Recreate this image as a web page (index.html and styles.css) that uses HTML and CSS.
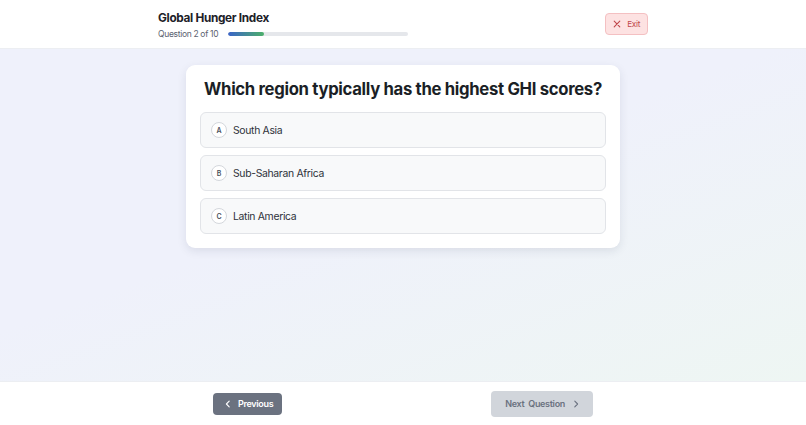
FILE: index.html
```html
<!DOCTYPE html>
<html lang="en">
<head>
    <meta charset="UTF-8">
    <meta name="viewport" content="width=device-width, initial-scale=1.0">
    <title>Global Hunger Index Quiz</title>
    <link rel="stylesheet" href="styles.css">
</head>
<body>
    <div class="page">
        <div class="header">
            <div class="header-inner">
                <div class="header-left">
                    <h1>Global Hunger Index</h1>
                    <div class="progress-row">
                        <span class="progress-label">Question 2 of 10</span>
                        <div class="progress-track">
                            <div class="progress-fill" style="width: 20%"></div>
                        </div>
                    </div>
                </div>
                <button class="exit-btn">
                    <svg width="8" height="8" viewBox="0 0 10 10"><path d="M1.5 1.5l7 7M8.5 1.5l-7 7" stroke="currentColor" stroke-width="1.4" stroke-linecap="round"/></svg>
                    Exit
                </button>
            </div>
        </div>

        <div class="main">
            <div class="card">
                <h2>Which region typically has the highest GHI scores?</h2>
                <div class="options">
                    <div class="option"><span class="letter">A</span>South Asia</div>
                    <div class="option"><span class="letter">B</span>Sub-Saharan Africa</div>
                    <div class="option"><span class="letter">C</span>Latin America</div>
                </div>
            </div>
        </div>

        <div class="footer">
            <div class="footer-inner">
                <button class="prev-btn">
                    <svg width="8" height="8" viewBox="0 0 10 10"><path d="M6.5 1.5L3 5l3.5 3.5" fill="none" stroke="currentColor" stroke-width="1.4" stroke-linecap="round" stroke-linejoin="round"/></svg>
                    Previous
                </button>
                <button class="next-btn">
                    Next Question
                    <svg width="8" height="8" viewBox="0 0 10 10"><path d="M3.5 1.5L7 5 3.5 8.5" fill="none" stroke="currentColor" stroke-width="1.4" stroke-linecap="round" stroke-linejoin="round"/></svg>
                </button>
            </div>
        </div>
    </div>
</body>
</html>
```

FILE: styles.css
```css
/* Global Styles */
body {
    font-family: Inter, "Liberation Sans", sans-serif;
    margin: 0;
    padding: 0;
    color: #1f2329;
    letter-spacing: -0.02em;
}

.page {
    display: flex;
    flex-direction: column;
    height: 100vh;
}

button {
    font-family: inherit;
    letter-spacing: inherit;
    border: none;
    cursor: pointer;
    display: flex;
    align-items: center;
}

/* Header */
.header {
    background: #fff;
    border-bottom: 1px solid #eceef2;
    height: 49px;
    box-sizing: border-box;
}

.header-inner {
    width: 490px;
    margin: 0 auto;
    display: flex;
    justify-content: space-between;
    align-items: center;
    height: 100%;
}

.header h1 {
    margin: 0;
    font-size: 11.8px;
    font-weight: 700;
    color: #1d2128;
    line-height: 16px;
    margin-top: 1px;
}

.progress-row {
    display: flex;
    align-items: center;
    gap: 10px;
    margin-top: 3px;
}

.progress-label {
    font-size: 8.5px;
    color: #5b6270;
}

.progress-track {
    width: 180px;
    height: 4px;
    border-radius: 2px;
    background: #e5e7eb;
    overflow: hidden;
}

.progress-fill {
    height: 100%;
    border-radius: 2px;
    background: linear-gradient(90deg, #3b64c8, #4caf6a);
}

.exit-btn {
    gap: 6px;
    height: 22px;
    padding: 0 7px;
    font-size: 8.2px;
    color: #c0474b;
    background: #fde2e2;
    border: 1px solid #f4c0c2;
    border-radius: 4px;
    box-sizing: border-box;
}

/* Main */
.main {
    flex: 1;
    background: linear-gradient(160deg, #eff1fb 0%, #eff1fb 45%, #eef6f3 100%);
    padding-top: 16px;
}

.card {
    width: 434px;
    margin: 0 auto;
    background: #fff;
    border-radius: 9px;
    box-shadow: 0 3px 10px rgba(30, 40, 70, 0.10);
    padding: 13px 14px 14px;
    box-sizing: border-box;
}

.card h2 {
    margin: 0;
    text-align: center;
    font-size: 16.7px;
    font-weight: 700;
    color: #1b1f26;
    line-height: 22px;
    white-space: nowrap;
}

.options {
    display: flex;
    flex-direction: column;
    gap: 7px;
    margin-top: 12px;
}

.option {
    display: flex;
    align-items: center;
    height: 36px;
    box-sizing: border-box;
    padding: 0 10px;
    background: #f8f9fa;
    border: 1px solid #e2e4e8;
    border-radius: 6px;
    font-size: 10.4px;
    color: #2d3139;
}

.letter {
    width: 16px;
    height: 16px;
    border: 1px solid #d4d7dc;
    border-radius: 50%;
    background: #fff;
    display: flex;
    align-items: center;
    justify-content: center;
    font-size: 7px;
    font-weight: 600;
    color: #4a505b;
    margin-right: 6px;
    box-sizing: border-box;
    letter-spacing: 0;
}

/* Footer */
.footer {
    height: 44px;
    background: #fff;
    border-top: 1px solid #eceef2;
    box-sizing: border-box;
}

.footer-inner {
    width: 380px;
    margin: 0 auto;
    display: flex;
    justify-content: space-between;
    align-items: center;
    height: 100%;
}

.prev-btn {
    gap: 6px;
    height: 22px;
    padding: 0 9px 0 11px;
    background: #6b7280;
    color: #fff;
    font-size: 9px;
    font-weight: 600;
    border-radius: 4px;
}

.next-btn {
    gap: 7px;
    height: 26px;
    padding: 0 13px 0 14px;
    background: #d1d5db;
    color: #6b7280;
    font-size: 9px;
    font-weight: 600;
    word-spacing: 2px;
    border-radius: 4px;
}
```
